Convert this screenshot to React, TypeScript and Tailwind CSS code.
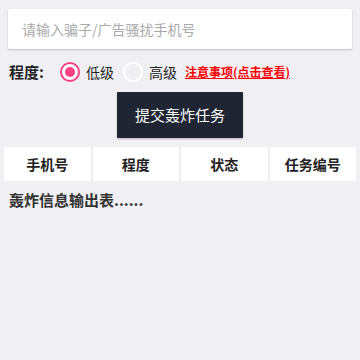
import { useState } from 'react'

const font = { fontFamily: '"Noto Sans CJK SC", "Noto Sans", sans-serif' }

function Radio({ checked, label, onClick }: { checked: boolean; label: string; onClick: () => void }) {
  return (
    <button type="button" onClick={onClick} className="flex items-center">
      <span
        className={
          checked
            ? 'w-[20px] h-[20px] rounded-full border-[2px] border-[#ff4081] bg-white flex items-center justify-center'
            : 'w-[20px] h-[20px] rounded-full border-[2px] border-white bg-[#efeff4]'
        }
      >
        {checked && <span className="w-[10px] h-[10px] rounded-full bg-[#ff4081]" />}
      </span>
      <span className="ml-[6px] text-[14px] text-[#222]">{label}</span>
    </button>
  )
}

export default function App() {
  const [level, setLevel] = useState<'low' | 'high'>('low')

  return (
    <div className="w-[360px] h-[360px] bg-[#efeff4] overflow-hidden" style={font}>
      {/* Phone input */}
      <div className="pt-[9px] px-[8px]">
        <input
          placeholder="请输入骗子/广告骚扰手机号"
          className="w-full h-[40px] bg-white rounded-[2px] shadow-[0_1px_2px_rgba(0,0,0,0.2)] px-[14px] text-[14px] text-[#333] placeholder:text-[#aaa] outline-none"
        />
      </div>

      {/* Level */}
      <div className="flex items-center h-[24px] mt-[11px] pl-[9px]">
        <span className="text-[15px] font-bold text-[#222] w-[51px]">程度:</span>
        <Radio checked={level === 'low'} label="低级" onClick={() => setLevel('low')} />
        <span className="w-[9px]" />
        <Radio checked={level === 'high'} label="高级" onClick={() => setLevel('high')} />
        <a href="#" className="ml-[8px] text-[12px] font-bold text-[#ff0000] underline">
          注意事项(点击查看)
        </a>
      </div>

      {/* Submit */}
      <div className="flex justify-center mt-[8px]">
        <button className="w-[126px] h-[46px] bg-[#202533] text-white text-[15px] rounded-[1px] shadow-[0_1px_2px_rgba(0,0,0,0.25)]">
          提交轰炸任务
        </button>
      </div>

      {/* Table header */}
      <div className="mx-[4px] mt-[9px] grid grid-cols-4 gap-[2px]">
        {['手机号', '程度', '状态', '任务编号'].map((h) => (
          <div key={h} className="h-[34px] bg-white flex items-center justify-center text-[14px] font-bold text-[#222]">
            {h}
          </div>
        ))}
      </div>

      <div className="pl-[9px] mt-[8px] text-[15px] font-bold text-[#333]">轰炸信息输出表......</div>
    </div>
  )
}
